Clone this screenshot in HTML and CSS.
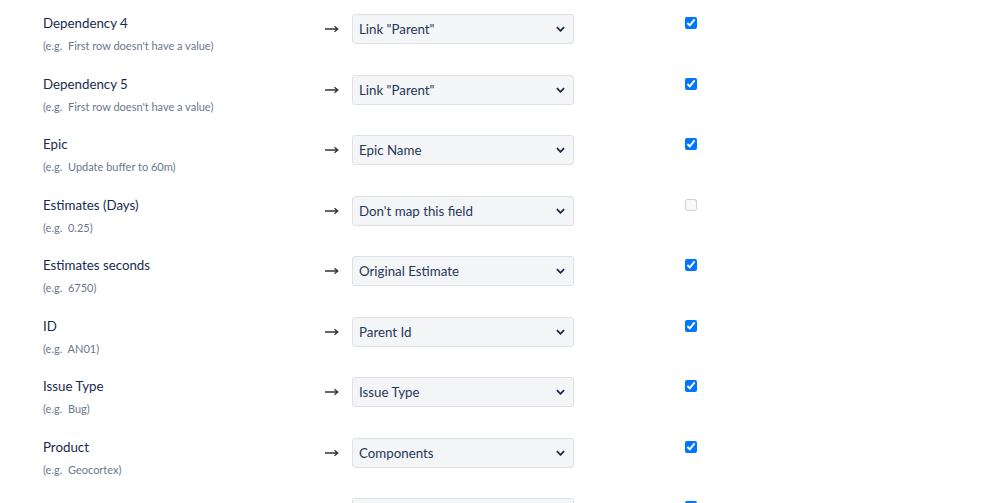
FILE: index.html
```html
<!DOCTYPE html>
<html>
<head>
<meta charset="utf-8">
<link rel="stylesheet" href="styles.css">
</head>
<body>
<div class="mapping">
  <div class="row">
    <div class="field"><div class="name">Dependency 4</div><div class="example">(e.g.&nbsp; First row doesn't have a value)</div></div>
    <div class="arrow"><svg viewBox="0 0 14 8"><path d="M0 4h12.5M9.5 1.2L12.8 4 9.5 6.8" /></svg></div>
    <div class="select"><span>Link "Parent"</span><svg class="chev" viewBox="0 0 10 6"><path d="M1 1l4 4 4-4" /></svg></div>
    <div class="check"><input type="checkbox" checked></div>
  </div>
  <div class="row">
    <div class="field"><div class="name">Dependency 5</div><div class="example">(e.g.&nbsp; First row doesn't have a value)</div></div>
    <div class="arrow"><svg viewBox="0 0 14 8"><path d="M0 4h12.5M9.5 1.2L12.8 4 9.5 6.8" /></svg></div>
    <div class="select"><span>Link "Parent"</span><svg class="chev" viewBox="0 0 10 6"><path d="M1 1l4 4 4-4" /></svg></div>
    <div class="check"><input type="checkbox" checked></div>
  </div>
  <div class="row">
    <div class="field"><div class="name">Epic</div><div class="example">(e.g.&nbsp; Update buffer to 60m)</div></div>
    <div class="arrow"><svg viewBox="0 0 14 8"><path d="M0 4h12.5M9.5 1.2L12.8 4 9.5 6.8" /></svg></div>
    <div class="select"><span>Epic Name</span><svg class="chev" viewBox="0 0 10 6"><path d="M1 1l4 4 4-4" /></svg></div>
    <div class="check"><input type="checkbox" checked></div>
  </div>
  <div class="row">
    <div class="field"><div class="name">Estimates (Days)</div><div class="example">(e.g.&nbsp; 0.25)</div></div>
    <div class="arrow"><svg viewBox="0 0 14 8"><path d="M0 4h12.5M9.5 1.2L12.8 4 9.5 6.8" /></svg></div>
    <div class="select"><span>Don't map this field</span><svg class="chev" viewBox="0 0 10 6"><path d="M1 1l4 4 4-4" /></svg></div>
    <div class="check"><input type="checkbox" disabled></div>
  </div>
  <div class="row">
    <div class="field"><div class="name">Estimates seconds</div><div class="example">(e.g.&nbsp; 6750)</div></div>
    <div class="arrow"><svg viewBox="0 0 14 8"><path d="M0 4h12.5M9.5 1.2L12.8 4 9.5 6.8" /></svg></div>
    <div class="select"><span>Original Estimate</span><svg class="chev" viewBox="0 0 10 6"><path d="M1 1l4 4 4-4" /></svg></div>
    <div class="check"><input type="checkbox" checked></div>
  </div>
  <div class="row">
    <div class="field"><div class="name">ID</div><div class="example">(e.g.&nbsp; AN01)</div></div>
    <div class="arrow"><svg viewBox="0 0 14 8"><path d="M0 4h12.5M9.5 1.2L12.8 4 9.5 6.8" /></svg></div>
    <div class="select"><span>Parent Id</span><svg class="chev" viewBox="0 0 10 6"><path d="M1 1l4 4 4-4" /></svg></div>
    <div class="check"><input type="checkbox" checked></div>
  </div>
  <div class="row">
    <div class="field"><div class="name">Issue Type</div><div class="example">(e.g.&nbsp; Bug)</div></div>
    <div class="arrow"><svg viewBox="0 0 14 8"><path d="M0 4h12.5M9.5 1.2L12.8 4 9.5 6.8" /></svg></div>
    <div class="select"><span>Issue Type</span><svg class="chev" viewBox="0 0 10 6"><path d="M1 1l4 4 4-4" /></svg></div>
    <div class="check"><input type="checkbox" checked></div>
  </div>
  <div class="row">
    <div class="field"><div class="name">Product</div><div class="example">(e.g.&nbsp; Geocortex)</div></div>
    <div class="arrow"><svg viewBox="0 0 14 8"><path d="M0 4h12.5M9.5 1.2L12.8 4 9.5 6.8" /></svg></div>
    <div class="select"><span>Components</span><svg class="chev" viewBox="0 0 10 6"><path d="M1 1l4 4 4-4" /></svg></div>
    <div class="check"><input type="checkbox" checked></div>
  </div>
  <div class="row">
    <div class="field"></div>
    <div class="arrow"></div>
    <div class="select"></div>
    <div class="check"><input type="checkbox" checked></div>
  </div>
</div>
</body>
</html>
```
FILE: styles.css
```css
html, body {
  margin: 0;
  padding: 0;
  background: #ffffff;
  overflow: hidden;
}
body {
  font-family: Lato, "Open Sans", sans-serif;
  color: #172b4d;
}
.mapping {
  padding-left: 43px;
}
.row {
  display: grid;
  grid-template-columns: 270px 39px 222px 130px;
  height: 60.5px;
  box-sizing: border-box;
  padding-top: 14px;
  align-items: start;
}
.field {
  margin-top: -1px;
}
.name {
  font-size: 13.3px;
  line-height: 20px;
  color: #172b4d;
}
.example {
  margin-top: 5px;
  font-size: 11px;
  line-height: 15px;
  color: #6b778c;
}
.arrow {
  height: 30px;
  display: flex;
  align-items: center;
  padding-left: 12px;
}
.arrow svg {
  width: 14px;
  height: 8px;
  fill: none;
  stroke: #333333;
  stroke-width: 1.3;
}
.select {
  height: 30px;
  box-sizing: border-box;
  border: 1px solid #dfe1e6;
  border-radius: 3px;
  background: #f4f5f7;
  display: flex;
  align-items: center;
  justify-content: space-between;
  padding: 0 8px 0 6px;
  font-size: 13.3px;
  color: #253858;
}
.chev {
  width: 9px;
  height: 6px;
  fill: none;
  stroke: #172b4d;
  stroke-width: 2;
}
.check {
  padding-top: 3px;
  padding-left: 111px;
}
.check input {
  display: block;
  margin: 0;
  width: 12px;
  height: 12px;
}
```
